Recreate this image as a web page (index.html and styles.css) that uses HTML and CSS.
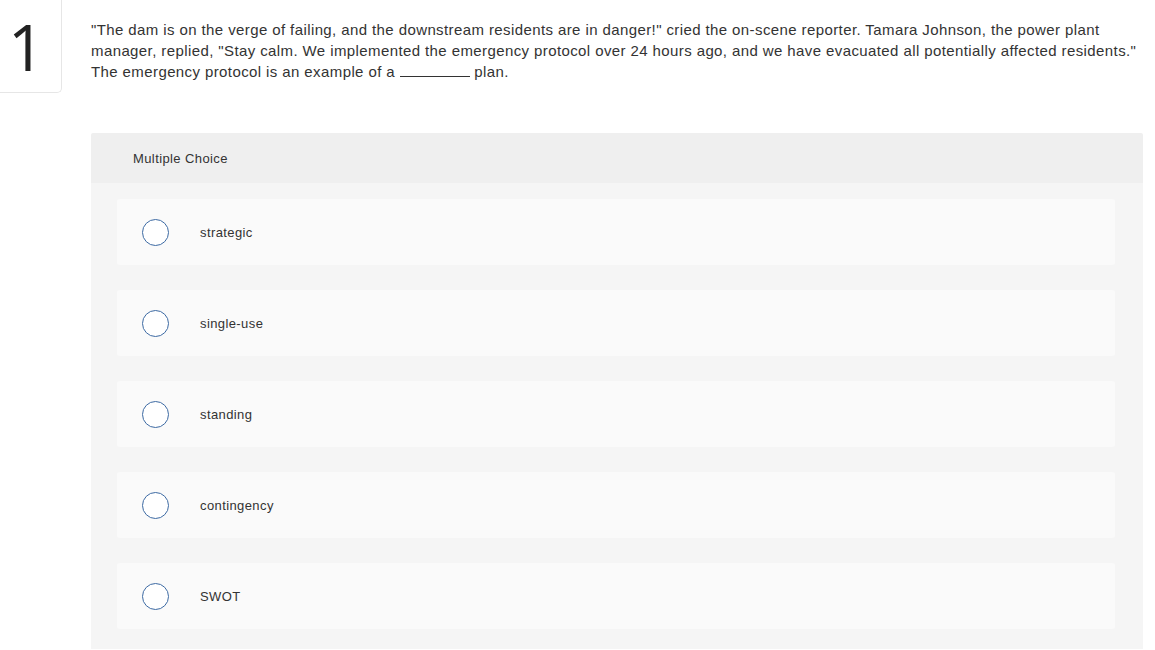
FILE: index.html
```html
<!DOCTYPE html>
<html>
<head>
<meta charset="utf-8">
<link rel="stylesheet" href="styles.css">
</head>
<body>
<div class="question">
  <div class="num">1</div>
  <div class="content">
    <p class="prompt">"The dam is on the verge of failing, and the downstream residents are in danger!" cried the on-scene reporter. Tamara Johnson, the power plant<br>manager, replied, "Stay calm. We implemented the emergency protocol over 24 hours ago, and we have evacuated all potentially affected residents."<br>The emergency protocol is an example of a <span class="blank"></span> plan.</p>
    <div class="panel">
      <div class="panel-head">Multiple Choice</div>
      <div class="panel-body">
        <div class="option"><span class="radio"></span><span class="label">strategic</span></div>
        <div class="option"><span class="radio"></span><span class="label">single-use</span></div>
        <div class="option"><span class="radio"></span><span class="label">standing</span></div>
        <div class="option"><span class="radio"></span><span class="label">contingency</span></div>
        <div class="option"><span class="radio"></span><span class="label">SWOT</span></div>
      </div>
    </div>
  </div>
</div>
</body>
</html>
```
FILE: styles.css
```css
html, body {
  margin: 0;
  padding: 0;
  background: #ffffff;
  font-family: "Liberation Sans", Arial, sans-serif;
  color: #333333;
}
.question {
  display: flex;
  align-items: flex-start;
}
.num {
  width: 62px;
  height: 93px;
  box-sizing: border-box;
  border: 1px solid #e6e6e6;
  border-left: none;
  border-top: none;
  border-radius: 0 0 5px 0;
  font-family: "Open Sans", sans-serif;
  font-weight: 400;
  font-size: 64px;
  line-height: 93px;
  color: #222;
  padding-left: 8px;
  flex: none;
}
.content {
  margin-left: 29px;
  flex: 1;
  margin-right: 12px;
}
.prompt {
  margin: 19px 0 0 0;
  font-size: 15px;
  letter-spacing: 0.4px;
  line-height: 21px;
  color: #333;
  white-space: nowrap;
}
.blank {
  display: inline-block;
  width: 70px;
  height: 1px;
  background: #333;
  vertical-align: baseline;
}
.panel {
  margin-top: 51px;
}
.panel-head {
  background: #efefef;
  height: 50px;
  display: flex;
  align-items: center;
  padding-left: 42px;
  font-size: 13px;
  letter-spacing: 0.4px;
  color: #333;
  border-radius: 2px 2px 0 0;
}
.panel-body {
  background: #f5f5f5;
  padding: 16px 28px 20px 26px;
  display: flex;
  flex-direction: column;
  gap: 25px;
}
.option {
  background: #fafafa;
  height: 66px;
  border-radius: 3px;
  display: flex;
  align-items: center;
  padding-left: 25px;
}
.radio {
  width: 27px;
  height: 27px;
  box-sizing: border-box;
  border: 1.5px solid #3d6aa3;
  border-radius: 50%;
  background: #fff;
  flex: none;
}
.label {
  margin-left: 31px;
  font-size: 13px;
  letter-spacing: 0.4px;
  color: #333;
}
```
